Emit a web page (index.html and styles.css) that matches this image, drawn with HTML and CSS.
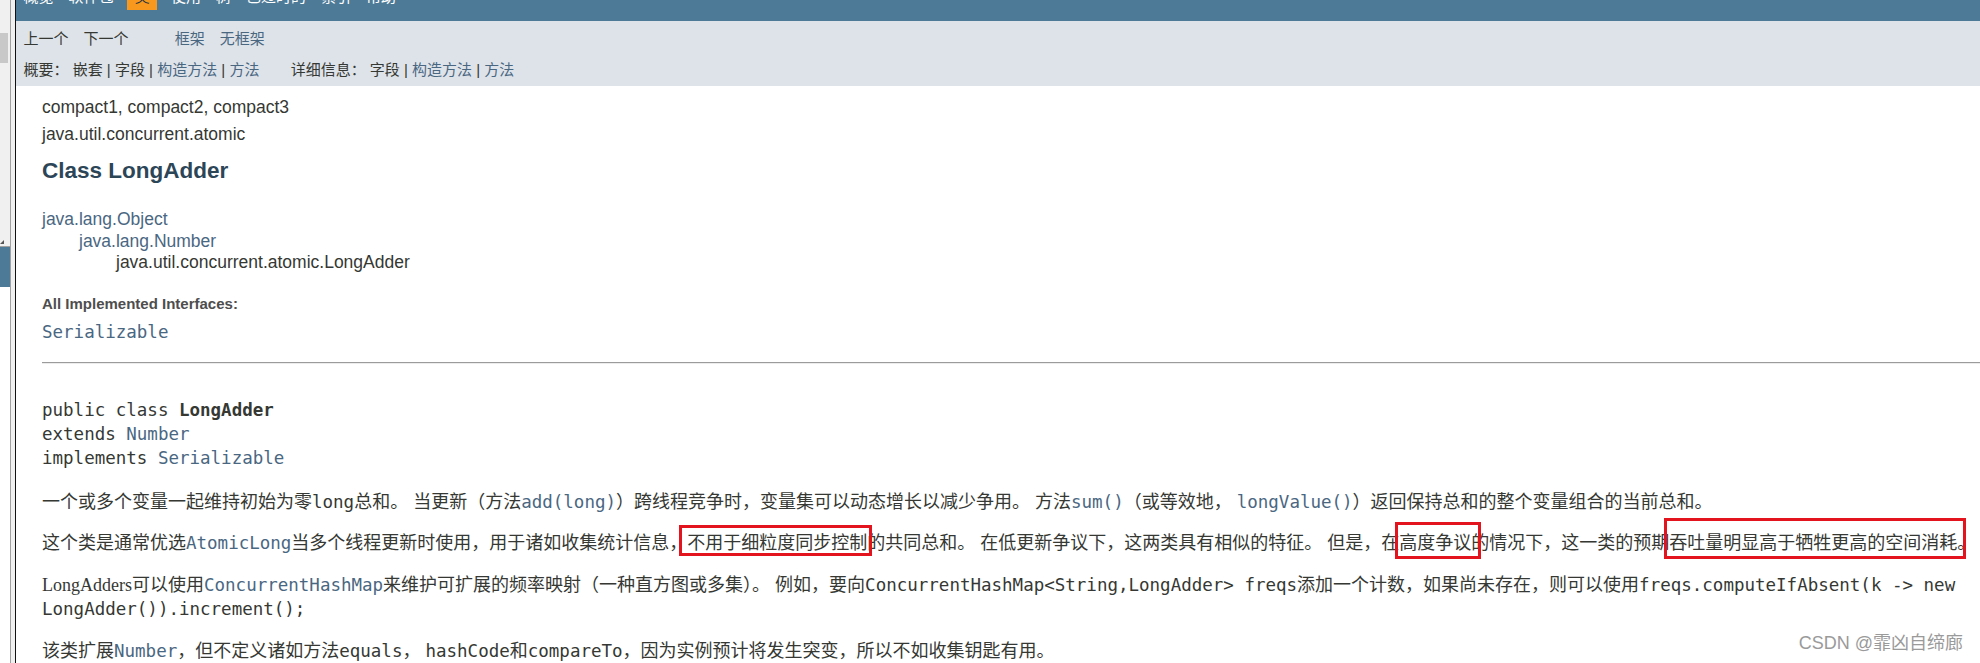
FILE: index.html
```html
<!DOCTYPE html>
<html lang="zh-CN">
<head>
<meta charset="utf-8">
<title>LongAdder</title>
<link rel="stylesheet" href="styles.css">
</head>
<body>
<div class="frameset">
  <div class="leftframe">
    <div class="lf-top">
      <div class="lf-thumb"></div>
      <div class="lf-arrow"></div>
    </div>
    <div class="lf-sel"></div>
    <div class="lf-rest"></div>
  </div>
  <div class="divider"></div>
  <div class="main">
    <div class="topnav">
      <ul class="navlist">
        <li>概览</li><li>软件包</li><li class="cur">类</li><li>使用</li><li>树</li><li>已过时的</li><li>索引</li><li>帮助</li>
      </ul>
    </div>
    <div class="subnav">
      <div class="subrow">
        <ul class="navlist2"><li>上一个</li><li>下一个</li></ul>
        <ul class="navlist2"><li><a>框架</a></li><li><a>无框架</a></li></ul>
      </div>
      <div class="subrow subrow2">
        <ul class="subnavlist"><li>概要：&nbsp;</li><li>嵌套&nbsp;|&nbsp;</li><li>字段&nbsp;|&nbsp;</li><li><a>构造方法</a>&nbsp;|&nbsp;</li><li><a>方法</a></li></ul>
        <ul class="subnavlist"><li>详细信息：&nbsp;</li><li>字段&nbsp;|&nbsp;</li><li><a>构造方法</a>&nbsp;|&nbsp;</li><li><a>方法</a></li></ul>
      </div>
    </div>
    <div class="content">
      <div class="subtitle">compact1, compact2, compact3</div>
      <div class="subtitle sub2">java.util.concurrent.atomic</div>
      <h2 class="title">Class LongAdder</h2>
      <ul class="inherit">
        <li><a>java.lang.Object</a>
          <ul class="inherit">
            <li><a>java.lang.Number</a>
              <ul class="inherit">
                <li>java.util.concurrent.atomic.LongAdder</li>
              </ul>
            </li>
          </ul>
        </li>
      </ul>
      <dl class="ifaces">
        <dt>All Implemented Interfaces:</dt>
        <dd><a class="code">Serializable</a></dd>
      </dl>
      <hr class="rule">
      <pre class="decl">public class <b>LongAdder</b>
extends <a>Number</a>
implements <a>Serializable</a></pre>
      <div class="block">
        <p class="p1">一个或多个变量一起维持初始为零<code>long</code>总和。 当更新（方法<a><code>add(long)</code></a>）跨线程竞争时，变量集可以动态增长以减少争用。 方法<a><code>sum()</code></a>（或等效地， <a><code>longValue()</code></a>）返回保持总和的整个变量组合的当前总和。</p>
        <p class="p2">这个类是通常优选<a><code>AtomicLong</code></a>当多个线程更新时使用，用于诸如收集统计信息，<span class="mk mk1">不用于细粒度同步控制</span>的共同总和。 在低更新争议下，这两类具有相似的特征。 但是，在<span class="mk mk2">高度争议</span>的情况下，这一类的预期<span class="mk mk3">吞吐量明显高于牺牲更高的空间消耗。</span></p>
        <p><span class="serif">LongAdders</span>可以使用<a><code>ConcurrentHashMap</code></a>来维护可扩展的频率映射（一种直方图或多集）。 例如，要向<code>ConcurrentHashMap&lt;String,LongAdder&gt; freqs</code>添加一个计数，如果尚未存在，则可以使用<code>freqs.computeIfAbsent(k -&gt; new LongAdder()).increment();</code></p>
        <p>该类扩展<a><code>Number</code></a>，但不定义诸如方法<code>equals</code>， <code>hashCode</code>和<code>compareTo</code>，因为实例预计将发生突变，所以不如收集钥匙有用。</p>
      </div>
    </div>
  </div>
  <div class="watermark">CSDN @霏凶自缔廊</div>
</div>
</body>
</html>
```

FILE: styles.css
```css
* { box-sizing: border-box; }
html, body { margin: 0; padding: 0; }
body {
  background: #ffffff;
  font-family: "Liberation Sans", "Noto Sans CJK SC", sans-serif;
  font-size: 17.5px;
  color: #353833;
  width: 1980px;
  height: 663px;
  overflow: hidden;
}
a { color: #4a6782; text-decoration: none; }

.frameset { display: flex; height: 663px; position: relative; }

/* left frame */
.leftframe { width: 10px; display: flex; flex-direction: column; }
.lf-top { height: 247px; background: #f0f0f0; border-bottom: 1px solid #a0a0a0; padding-top: 33px; }
.lf-thumb { width: 8px; height: 30px; background: #c8c8c8; }
.lf-arrow {
  margin-top: 177px;
  width: 0; height: 0;
  border-left: 4px solid transparent;
  border-bottom: 4px solid #555;
}
.lf-sel { height: 40px; background: #4d7a97; }
.lf-rest { flex: 1; background: #ffffff; }
.divider { width: 6px; background: #f0f0f0; border-left: 1px solid #a0a0a0; border-right: 1px solid #111; }

.main { flex: 1; min-width: 0; overflow: hidden; }

/* top nav */
.topnav { height: 21px; background: #4d7a97; overflow: hidden; }
.navlist {
  display: flex; list-style: none; margin: -11px 0 0; padding: 0;
  font-size: 15px; line-height: 15px;
}
.navlist li { padding: 0 7.5px 6px; color: #ffffff; }
.navlist li.cur { background: #f8981d; color: #253441; margin: 0 6.25px; }

/* sub nav */
.subnav { height: 65px; background: #dee3e9; padding: 7px 0 6px; font-size: 15px; }
.subrow { display: flex; line-height: 21px; }
.subrow2 { margin-top: 10px; }
.navlist2 { display: flex; list-style: none; margin: 0 31.25px 0 0; padding: 0; }
.navlist2 li { padding: 0 7.5px; }
.subnavlist { display: flex; list-style: none; margin: 0 31.25px 0 0; padding: 0; }
.subnavlist:first-child { padding-left: 7.5px; }

/* content */
.content { width: 1976px; padding: 11px 0 0 26px; }
.subtitle { line-height: 21px; }
.sub2 { margin-top: 6px; }
.title {
  margin: 13px 0 0; font-size: 22.5px; line-height: 26px; font-weight: bold; color: #2c4557;
}
.inherit { list-style: none; margin: 25px 0 0; padding: 0; line-height: 21.5px; }
.inherit .inherit { margin: 0; padding-left: 37px; }
.ifaces { margin: 21.5px 0 0; }
.ifaces dt { font-size: 15px; line-height: 18px; font-weight: bold; color: #4e4e4e; }
.ifaces dd { margin: 7px 0 0; line-height: 24px; }
.code, code, .decl {
  font-family: "DejaVu Sans Mono", monospace;
  font-size: 17.5px;
}
.rule {
  margin: 18px 0 0; height: 0; border: 0;
  border-top: 1px solid #9b9b9b; border-bottom: 1px solid #ececec;
}
.decl { margin: 34px 0 0; line-height: 24px; color: #353833; }
.decl b { font-weight: bold; }

.block p { margin: 18px 0 0; font-size: 18px; line-height: 24px; }
.block p.p1 { margin-top: 20px; }
.block p.p2 { margin-top: 17px; }
.serif { font-family: "Liberation Serif", serif; }

.mk { position: relative; display: inline-block; }
.mk::after {
  content: ""; position: absolute; border: 3px solid #e3141e;
}
.mk1::after { left: -8px; right: -5px; top: -6px; bottom: -1px; }
.mk2::after { left: -4px; right: -10px; top: -9px; bottom: -4px; }
.mk3::after { left: -5px; right: 9px; top: -13px; bottom: -4px; }

.watermark {
  position: absolute; right: 17px; top: 631px;
  font-size: 18px; line-height: 24px; color: #9a9a9a;
  font-family: "Liberation Sans", "Noto Sans CJK SC", sans-serif;
}
```
